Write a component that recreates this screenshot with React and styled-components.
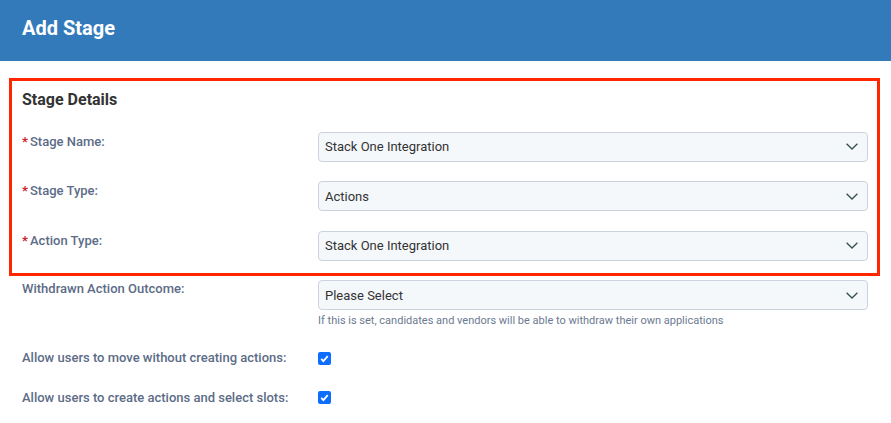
import React from 'react';
import styled, { createGlobalStyle } from 'styled-components';

const GlobalStyle = createGlobalStyle`
  html, body {
    margin: 0;
    padding: 0;
    background: #fff;
    font-family: Roboto, "Liberation Sans", sans-serif;
  }
`;

const Page = styled.div`
  width: 891px;
  height: 423px;
  overflow: hidden;
`;

const Header = styled.header`
  height: 61px;
  box-sizing: border-box;
  padding: 16px 22px 0;
  background: #337abb;
`;

const Title = styled.h1`
  margin: 0;
  color: #fff;
  font-size: 20px;
  line-height: 24px;
  font-weight: 700;
`;

const Highlight = styled.section`
  box-sizing: border-box;
  width: 871px;
  height: 198px;
  margin: 17px 0 0 9px;
  padding: 8px 9px 0 10px;
  border: 3px solid #ff2600;
`;

const SectionTitle = styled.h2`
  margin: 0 0 22px;
  color: #333;
  font-size: 16px;
  line-height: 21px;
  font-weight: 700;
`;

const Rows = styled.div`
  display: flex;
  flex-direction: column;
  gap: 19.4px;
`;

const Row = styled.div`
  display: grid;
  grid-template-columns: 296px 550px;
  align-items: start;
`;

const Label = styled.label`
  display: flex;
  align-items: baseline;
  padding-top: ${(p) => p.$top || 0}px;
  color: #5c6c87;
  font-size: 13px;
  line-height: 18px;
  font-weight: 500;
`;

const Star = styled.span`
  width: 8px;
  color: #c9242b;
  font-weight: 700;
`;

const Select = styled.div`
  display: flex;
  align-items: center;
  justify-content: space-between;
  box-sizing: border-box;
  height: 30px;
  padding: 0 9px ${(p) => (p.$flush ? 0 : 0.6)}px 6px;
  border: 1px solid #ccd3de;
  border-radius: 4px;
  background: #f5f8fb;
  color: #333;
  font-size: 13px;
`;

const Chevron = () => (
  <svg width="12" height="7" viewBox="0 0 12 7" fill="none">
    <path d="M.6.8 6 6l5.4-5.2" stroke="#37534f" strokeWidth="1.4" />
  </svg>
);

const Lower = styled.div`
  display: flex;
  flex-direction: column;
  margin: 4px 0 0 22px;
`;

const Hint = styled.p`
  margin: 3px 0 0;
  color: #6b7a91;
  font-size: 11px;
  line-height: 15px;
`;

const CheckRow = styled.div`
  display: grid;
  grid-template-columns: 296px auto;
  align-items: center;
  height: 18px;
  margin-top: ${(p) => p.$top}px;
`;

const Check = styled.span`
  display: flex;
  align-items: center;
  justify-content: center;
  width: 13px;
  height: 13px;
  border-radius: 2px;
  background: #0d6efd;
`;

const Tick = () => (
  <svg width="9" height="9" viewBox="0 0 9 9" fill="none">
    <path d="M1.2 4.8l2.2 2.3 4.3-5" stroke="#fff" strokeWidth="1.8" />
  </svg>
);

const fields = [
  { label: 'Stage Name:', value: 'Stack One Integration' },
  { label: 'Stage Type:', value: 'Actions' },
  { label: 'Action Type:', value: 'Stack One Integration' },
];

export default function App() {
  return (
    <Page>
      <GlobalStyle />
      <Header>
        <Title>Add Stage</Title>
      </Header>
      <Highlight>
        <SectionTitle>Stage Details</SectionTitle>
        <Rows>
          {fields.map((f) => (
            <Row key={f.label}>
              <Label $top={1}>
                <Star>*</Star>
                {f.label}
              </Label>
              <Select>
                {f.value}
                <Chevron />
              </Select>
            </Row>
          ))}
        </Rows>
      </Highlight>
      <Lower>
        <Row>
          <Label>Withdrawn Action Outcome:</Label>
          <div>
            <Select $flush>
              Please Select
              <Chevron />
            </Select>
            <Hint>If this is set, candidates and vendors will be able to withdraw their own applications</Hint>
          </div>
        </Row>
        <CheckRow $top={21}>
          <Label>Allow users to move without creating actions:</Label>
          <Check>
            <Tick />
          </Check>
        </CheckRow>
        <CheckRow $top={21}>
          <Label $top={1}>Allow users to create actions and select slots:</Label>
          <Check>
            <Tick />
          </Check>
        </CheckRow>
      </Lower>
    </Page>
  );
}
